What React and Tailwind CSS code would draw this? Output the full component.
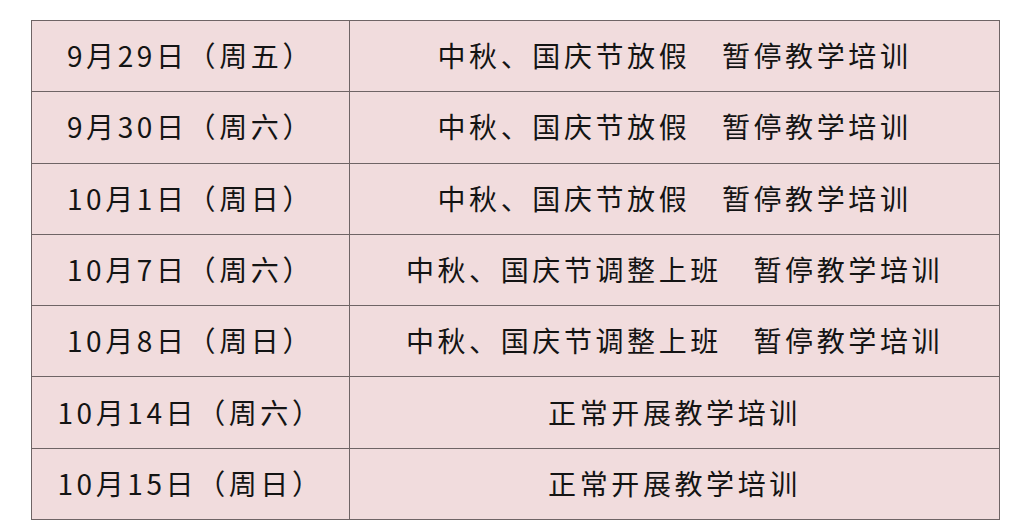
import React from "react";

const rows = [
  ["9月29日（周五）", "中秋、国庆节放假　暂停教学培训"],
  ["9月30日（周六）", "中秋、国庆节放假　暂停教学培训"],
  ["10月1日（周日）", "中秋、国庆节放假　暂停教学培训"],
  ["10月7日（周六）", "中秋、国庆节调整上班　暂停教学培训"],
  ["10月8日（周日）", "中秋、国庆节调整上班　暂停教学培训"],
  ["10月14日（周六）", "正常开展教学培训"],
  ["10月15日（周日）", "正常开展教学培训"],
];

const App = () => {
  return (
    <div
      className="w-[1034px] h-[529px] bg-white pt-[20px] pl-[31px] overflow-hidden"
      style={{ fontFamily: '"Noto Sans CJK SC", "Noto Sans", sans-serif' }}
    >
      <table className="border-collapse bg-[#f1dcdd] text-[#141414] text-[28px] tracking-[3.6px]">
        <tbody>
          {rows.map(([date, note], i) => (
            <tr key={i} className="h-[71.3px]">
              <td className="w-[318px] border-[1.5px] border-[#6f6465] text-center align-middle p-0 pb-[2px] leading-none">
                {date}
              </td>
              <td className="w-[650px] border-[1.5px] border-[#6f6465] text-center align-middle p-0 pb-[2px] leading-none">
                {note}
              </td>
            </tr>
          ))}
        </tbody>
      </table>
    </div>
  );
};

export default App;
